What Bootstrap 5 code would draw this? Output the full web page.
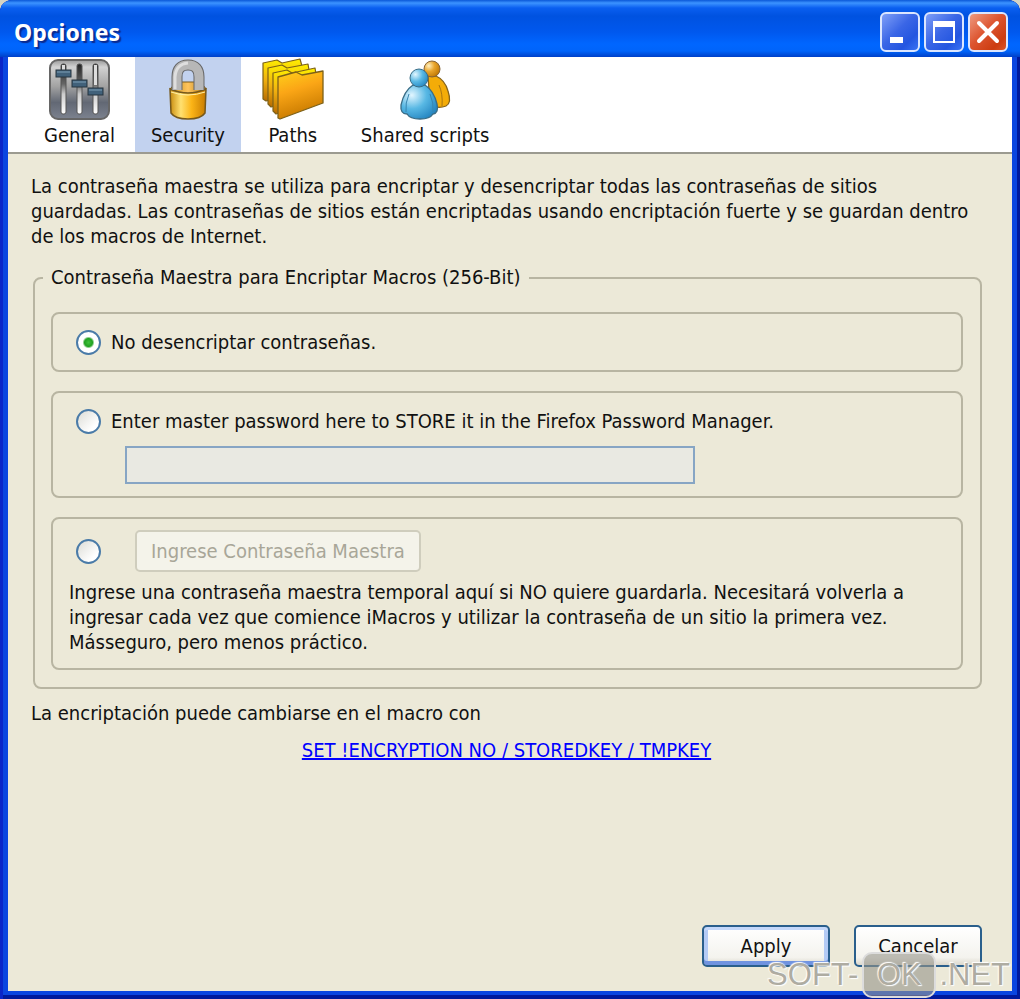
<!DOCTYPE html>
<html lang="es">
<head>
<meta charset="utf-8">
<meta name="viewport" content="width=device-width, initial-scale=1">
<title>Opciones</title>
<link href="https://cdn.jsdelivr.net/npm/bootstrap@5.3.0/dist/css/bootstrap.min.css" rel="stylesheet">
<style>
  body { font-family: "DejaVu Sans Condensed", "Noto Sans", sans-serif; font-size: 20px; line-height: 25px; color: #111; background: #d5d3c3; }
  .xp-window { background: #0a46e0; border-radius: 12px 12px 0 0; padding: 0 8px 8px; box-shadow: inset 3px 0 #0a26c8, inset -3px 0 #001a9c, inset 0 -4px #001a9c; }
  .xp-title { height: 57px; margin: 0 -8px; padding: 8px 12px 0 14px; border-radius: 12px 12px 0 0; background: linear-gradient(#0a58d8 0, #3c93ff 3px, #0a5ff0 8px, #0052e0 16px, #0058ee 32px, #0066ff 44px, #0064fa 51px, #0040c8 57px); }
  .xp-title h1 { font-family: "Noto Sans", sans-serif; font-size: 23px; line-height: 32px; color: #fff; text-shadow: 2px 2px 1px #0a2a90; }
  .caption-btn { width: 40px; height: 40px; padding: 0; border: 2px solid #dbe6ff; border-radius: 6px; background: linear-gradient(135deg, #7f9ff8, #3a66e6 45%, #2456e0 75%, #3a72f4); }
  .caption-close { background: linear-gradient(135deg, #ee9a80, #dd5530 45%, #cc3c10 80%, #d95428); }
  .xp-tools { background: #fff; border-bottom: 2px solid #9b9a90; padding: 0 20px; }
  .tool-tab { padding: 0 16px 4px; color: #111; border-radius: 0; background: transparent; }
  .tool-tab.active { background: #c2d2ef; }
  .tool-tab svg { width: 64px; height: 66px; }
  .xp-body { background: #ece9d8; padding: 20px 30px 24px 23px; }
  .group-main, .group-item { border: 2px solid #b8b5a2; border-radius: 8px; }
  .group-main { padding: 22px 17px 17px 16px; margin: 16px 0 12px 2px; }
  .group-main legend { font-size: 20px; line-height: 25px; padding: 0 8px; margin-left: -8px; }
  .group-stack { gap: 19px; }
  .group-item { padding: 16px 16px 15px; }
  .group-item-store { padding-bottom: 12px; }
  .group-item-temp { padding-top: 11px; padding-bottom: 13px; }
  .xp-radio { appearance: none; width: 25px; height: 25px; flex: none; margin: 0 10px 0 7px; border: 2px solid #4a7ba8; border-radius: 50%; background: linear-gradient(135deg, #dcdcd6, #fff 75%); }
  .xp-radio:checked { background: radial-gradient(circle, #3fc13b 0, #21a121 4px, #fff 6px); }
  .key-input { width: 570px; max-width: 100%; height: 38px; border: 2px solid #87a5c4; border-radius: 0; background: #e9e9e2; }
  .key-input:disabled { background: #e9e9e2; }
  .temp-btn { height: 42px; padding: 0 14px; font-size: 20px; line-height: 25px; border: 2px solid #cfcdbd; border-radius: 5px; background: #f4f3ea; }
  .temp-btn:disabled { color: #a8a698; border-color: #cfcdbd; background: #f4f3ea; opacity: 1; }
  .xp-btn { width: 128px; height: 42px; padding: 0; font-size: 20px; color: #111; border: 2px solid #2a5f8c; border-radius: 5px; background: linear-gradient(#fff, #f4f3ee 80%, #dcd8cc); }
  .xp-btn-default { box-shadow: inset 0 3px #c5d8fb, inset 0 -4px #7093e0, inset 4px 0 #b4cbf5, inset -4px 0 #b4cbf5; }
  .site-link { color: #00f; }
  .site-stamp { right: 10px; bottom: 1px; font-family: "Liberation Sans", sans-serif; font-size: 31px; line-height: 42px; color: #aeaca2; text-shadow: 0 0 2px #fff, 1px 1px 1px #fff, -1px -1px 1px #fff; pointer-events: none; }
  .stamp-box { width: 74px; margin: 0 3px 0 4px; border: 2px solid #dcdcdc; border-radius: 10px; background: rgba(150, 148, 138, .6); color: #aeaca2; }
</style>
</head>
<body>
<main class="xp-window d-flex flex-column min-vh-100 position-relative">
  <header class="xp-title d-flex justify-content-between">
    <h1 class="fw-bold m-0 pt-2">Opciones</h1>
    <div class="d-flex gap-1 pt-1">
      <button class="btn caption-btn" type="button" aria-label="Minimizar"><svg class="d-block" width="36" height="36"><path fill="#fff" d="M8 23h13v6H8z"/></svg></button>
      <button class="btn caption-btn" type="button" aria-label="Maximizar"><svg class="d-block" width="36" height="36"><path fill="#fff" fill-rule="evenodd" d="M7 7h22v22H7zM9 13v14h18V13z"/></svg></button>
      <button class="btn caption-btn caption-close" type="button" aria-label="Cerrar"><svg class="d-block" width="36" height="36"><path stroke="#fff" stroke-width="4" stroke-linecap="round" d="M9 9l18 18M27 9L9 27"/></svg></button>
    </div>
  </header>

  <nav class="xp-tools d-flex flex-wrap gap-1" aria-label="Secciones">
    <button class="tool-tab border-0 d-flex flex-column align-items-center" type="button">
      <svg viewBox="0 0 64 66">
        <defs>
          <linearGradient id="panel" x1="0" y1="0" x2="0" y2="1"><stop offset="0" stop-color="#999"/><stop offset=".12" stop-color="#d2d2d2"/><stop offset=".45" stop-color="#a2a2a2"/><stop offset=".72" stop-color="#626874"/><stop offset="1" stop-color="#7c828f"/></linearGradient>
          <linearGradient id="slot" x1="0" y1="0" x2="0" y2="1"><stop offset="0" stop-color="#222"/><stop offset=".4" stop-color="#666"/><stop offset=".6" stop-color="#ccc"/><stop offset="1" stop-color="#fff"/></linearGradient>
        </defs>
        <rect x="3" y="3" width="59" height="59" rx="8" fill="url(#panel)" stroke="#666" stroke-width="2"/>
        <g stroke="#555" fill="url(#slot)"><rect x="14" y="7" width="5" height="50" rx="2"/><rect x="30" y="7" width="5" height="50" rx="2"/><rect x="46" y="7" width="5" height="50" rx="2"/></g>
        <path fill="#ddd" d="M47 8h3v20h-3zM15 8h3v5h-3z"/>
        <g fill="#41617a" stroke="#26353f" stroke-width="1"><rect x="9" y="13" width="15" height="7"/><rect x="25" y="23" width="15" height="7"/><rect x="41" y="31" width="15" height="7"/></g>
        <path stroke="#7fa0b6" d="M10 15h13M26 25h13M42 33h13"/>
      </svg>
      General
    </button>
    <button class="tool-tab active border-0 d-flex flex-column align-items-center" type="button" aria-current="page">
      <svg viewBox="0 0 64 66">
        <defs>
          <linearGradient id="brass"><stop offset="0" stop-color="#c88c10"/><stop offset=".3" stop-color="#ffe070"/><stop offset=".6" stop-color="#fbb416"/><stop offset="1" stop-color="#c77b00"/></linearGradient>
          <linearGradient id="lid"><stop offset="0" stop-color="#bc8a1c"/><stop offset=".5" stop-color="#ffc45c"/><stop offset="1" stop-color="#a87412"/></linearGradient>
        </defs>
        <path fill="url(#lid)" stroke="#7b5a1c" d="M14 32q4-6 10-7h16q7 1 10 7-18 9-36 0z"/>
        <path fill="url(#brass)" stroke="#75581c" stroke-width="1.5" d="M14 32q18 8 36 0l-1 24q-4 6-17 6t-17-6z"/>
        <path fill="none" stroke="#666" stroke-width="11" d="M21 33V20Q21 8 32 8t11 12v13"/>
        <path fill="none" stroke="#b7b7b7" stroke-width="9" d="M21 33V20Q21 8 32 8t11 12v13"/>
        <path fill="none" stroke="#dedede" stroke-width="3" d="M19 32V20Q20 7 32 6"/>
        <path fill="none" stroke="#fff0a8" d="M15 35q17 6 34 0"/>
      </svg>
      Security
    </button>
    <button class="tool-tab border-0 d-flex flex-column align-items-center" type="button">
      <svg viewBox="0 0 64 66">
        <defs><linearGradient id="folder" x1="0" y1="0" x2=".3" y2="1"><stop offset="0" stop-color="#ffd21a"/><stop offset=".45" stop-color="#fba616"/><stop offset="1" stop-color="#c87a00"/></linearGradient>
        <linearGradient id="sheet" x1="0" y1="0" x2="0" y2="1"><stop offset="0" stop-color="#fff000"/><stop offset=".5" stop-color="#f0b010"/><stop offset="1" stop-color="#b86c00"/></linearGradient></defs>
        <g fill="url(#sheet)" stroke="#7d6118" stroke-width="1.2" stroke-linejoin="round">
          <path d="M2 6l14-3 5 3 18-4 2 7v27L5 44l-3-2z"/><path d="M7 11l14-3 5 3 21-4 1 6v28L10 50l-3-3z"/><path d="M12 16l14-3 5 3 23-5 1 6v28L15 57l-3-3z"/>
        </g>
        <path fill="url(#folder)" stroke="#7d6118" stroke-width="1.3" stroke-linejoin="round" d="M17 20l18-5 6 3 21-4v32L19 62l-2-1z"/>
      </svg>
      Paths
    </button>
    <button class="tool-tab border-0 d-flex flex-column align-items-center" type="button">
      <svg viewBox="0 0 64 66">
        <defs>
          <radialGradient id="gold" cx=".3" cy=".3" r=".8"><stop offset="0" stop-color="#fff0c0"/><stop offset=".45" stop-color="#e9a52c"/><stop offset="1" stop-color="#bc7400"/></radialGradient>
          <radialGradient id="aqua" cx=".3" cy=".3" r=".8"><stop offset="0" stop-color="#e2f6ff"/><stop offset=".5" stop-color="#58b8e4"/><stop offset="1" stop-color="#2384c0"/></radialGradient>
        </defs>
        <path fill="#f4ac08" stroke="#85631c" stroke-width="1.3" d="M35 19h8q9 4 12 15 4 12-2 15-8 3-16-1z"/>
        <circle cx="39" cy="12" r="8" fill="url(#gold)" stroke="#856338"/>
        <path fill="none" stroke="#a87512" d="M46 28q4 9 3 21"/>
        <path fill="url(#aqua)" stroke="#3a6c85" stroke-width="1.3" d="M20 28q-9 6-12 20-1 9 6 9 3 5 13 5t13-5q6-1 4-10-3-13-12-19z"/>
        <circle cx="26" cy="21" r="9" fill="url(#aqua)" stroke="#3a6c85"/>
        <path fill="none" stroke="#3785b0" d="M16 37q-4 9-3 18M37 37q4 9 3 18"/>
      </svg>
      Shared scripts
    </button>
  </nav>

  <form class="xp-body d-flex flex-column flex-grow-1">
    <p class="m-0">La contraseña maestra se utiliza para encriptar y desencriptar todas las contraseñas de sitios<br>guardadas. Las contraseñas de sitios están encriptadas usando encriptación fuerte y se guardan dentro<br>de los macros de Internet.</p>

    <fieldset class="group-main">
      <legend class="float-none w-auto mb-0">Contraseña Maestra para Encriptar Macros (256-Bit)</legend>
      <div class="group-stack d-flex flex-column">
        <div class="group-item d-flex align-items-center">
          <input class="xp-radio" type="radio" name="mode" id="none" checked>
          <label for="none">No desencriptar contraseñas.</label>
        </div>
        <div class="group-item group-item-store">
          <div class="d-flex align-items-center">
            <input class="xp-radio" type="radio" name="mode" id="store">
            <label for="store">Enter master password here to STORE it in the Firefox Password Manager.</label>
          </div>
          <div class="ms-5 ps-2 pt-2 mt-1"><input class="key-input form-control" type="password" aria-label="Contraseña maestra" disabled></div>
        </div>
        <div class="group-item group-item-temp">
          <div class="d-flex align-items-center">
            <input class="xp-radio" type="radio" name="mode" id="temp" aria-label="Contraseña maestra temporal">
            <button class="temp-btn btn ms-4" type="button" disabled>Ingrese Contraseña Maestra</button>
          </div>
          <p class="m-0 pt-2">Ingrese una contraseña maestra temporal aquí si NO quiere guardarla. Necesitará volverla a<br>ingresar cada vez que comience iMacros y utilizar la contraseña de un sitio la primera vez.<br>Másseguro, pero menos práctico.</p>
        </div>
      </div>
    </fieldset>

    <p class="m-0">La encriptación puede cambiarse en el macro con</p>
    <p class="text-center m-0 pt-2 mt-1"><a class="site-link" href="#">SET !ENCRYPTION NO / STOREDKEY / TMPKEY</a></p>

    <div class="d-flex justify-content-end gap-4 mt-auto">
      <button class="btn xp-btn xp-btn-default" type="submit">Apply</button>
      <button class="btn xp-btn" type="button">Cancelar</button>
    </div>
  </form>

  <div class="site-stamp position-absolute d-flex align-items-center">SOFT-<span class="stamp-box text-center">OK</span>.NET</div>
</main>
<script src="https://cdn.jsdelivr.net/npm/bootstrap@5.3.0/dist/js/bootstrap.bundle.min.js"></script>
</body>
</html>
